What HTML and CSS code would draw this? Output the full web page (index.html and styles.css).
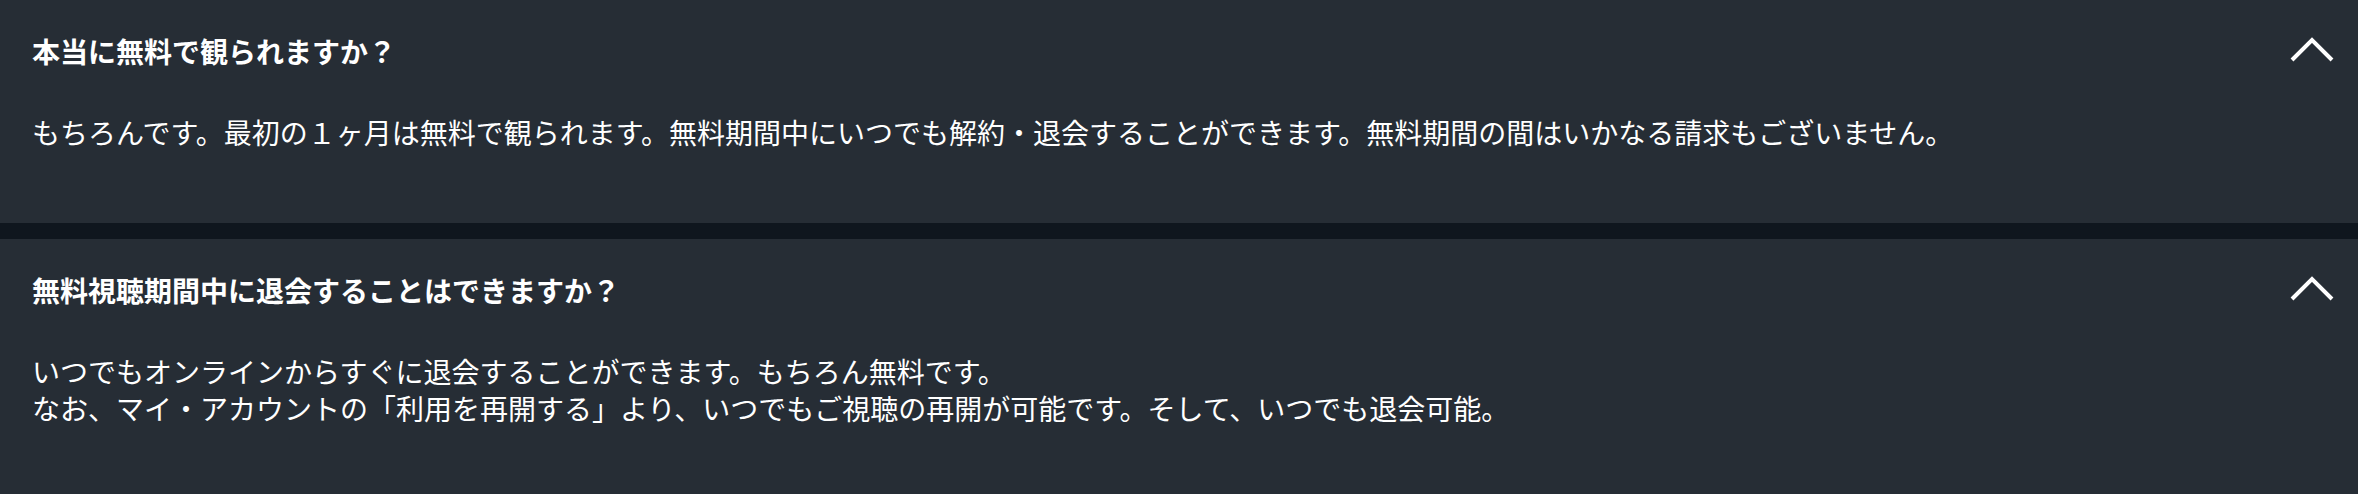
FILE: index.html
```html
<!DOCTYPE html>
<html lang="ja">
<head>
<meta charset="utf-8">
<link rel="stylesheet" href="styles.css">
</head>
<body>
<div class="faq">
  <section class="item">
    <div class="head">
      <h3 class="q">本当に無料で観られますか？</h3>
      <svg class="chev" width="46" height="28" viewBox="0 0 46 28"><polyline points="3,23 23,3 43,23" fill="none" stroke="#fff" stroke-width="4"/></svg>
    </div>
    <p class="a">もちろんです。最初の１ヶ月は無料で観られます。無料期間中にいつでも解約・退会することができます。無料期間の間はいかなる請求もございません。</p>
  </section>
  <div class="divider"></div>
  <section class="item">
    <div class="head">
      <h3 class="q">無料視聴期間中に退会することはできますか？</h3>
      <svg class="chev" width="46" height="28" viewBox="0 0 46 28"><polyline points="3,23 23,3 43,23" fill="none" stroke="#fff" stroke-width="4"/></svg>
    </div>
    <p class="a">いつでもオンラインからすぐに退会することができます。もちろん無料です。<br>なお、マイ・アカウントの「利用を再開する」より、いつでもご視聴の再開が可能です。そして、いつでも退会可能。</p>
  </section>
</div>
</body>
</html>
```
FILE: styles.css
```css
html, body {
  margin: 0;
  padding: 0;
  background: #262d35;
}
body {
  font-family: "Noto Sans CJK JP", sans-serif;
  color: #fff;
  overflow: hidden;
}
.item {
  background: #262d35;
  padding: 0 23px 72px 32px;
}
.head {
  height: 102px;
  display: flex;
  align-items: center;
  justify-content: space-between;
}
.q {
  margin: 0;
  font-size: 28px;
  font-weight: 700;
  line-height: 36px;
}
.chev {
  display: block;
}
.a {
  margin: 12px 0 0;
  font-size: 28px;
  font-weight: 400;
  line-height: 37px;
}
.divider {
  height: 16px;
  background: #0f161e;
}
```
